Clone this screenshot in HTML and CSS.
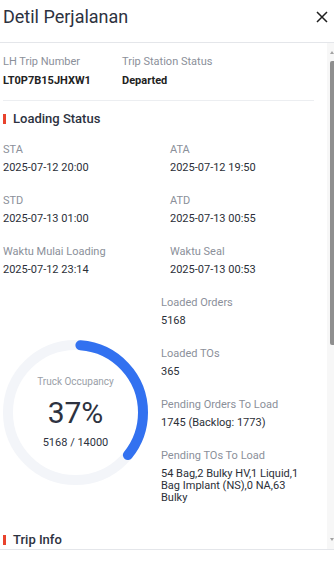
FILE: index.html
```html
<!DOCTYPE html>
<html lang="id">
<head>
    <meta charset="UTF-8">
    <meta name="viewport" content="width=device-width, initial-scale=1.0">
    <title>Detil Perjalanan</title>
    <link rel="stylesheet" href="styles.css">
</head>
<body>
    <div class="drawer">
        <div class="drawer-header">
            <h1>Detil Perjalanan</h1>
            <button class="close" aria-label="Tutup">
                <svg width="12" height="12" viewBox="0 0 12 12">
                    <path d="M1 1L11 11M11 1L1 11" stroke="#1f1f1f" stroke-width="1.5" fill="none"/>
                </svg>
            </button>
        </div>
        <div class="drawer-body">
            <div class="content">
                <div class="trip-row">
                    <div class="field">
                        <div class="label">LH Trip Number</div>
                        <div class="value strong">LT0P7B15JHXW1</div>
                    </div>
                    <div class="field">
                        <div class="label">Trip Station Status</div>
                        <div class="value strong">Departed</div>
                    </div>
                </div>
                <hr class="divider">

                <div class="section">
                    <h2 class="section-title">Loading Status</h2>
                    <div class="grid">
                        <div class="field">
                            <div class="label">STA</div>
                            <div class="value">2025-07-12 20:00</div>
                        </div>
                        <div class="field">
                            <div class="label">ATA</div>
                            <div class="value">2025-07-12 19:50</div>
                        </div>
                        <div class="field">
                            <div class="label">STD</div>
                            <div class="value">2025-07-13 01:00</div>
                        </div>
                        <div class="field">
                            <div class="label">ATD</div>
                            <div class="value">2025-07-13 00:55</div>
                        </div>
                        <div class="field">
                            <div class="label">Waktu Mulai Loading</div>
                            <div class="value">2025-07-12 23:14</div>
                        </div>
                        <div class="field">
                            <div class="label">Waktu Seal</div>
                            <div class="value">2025-07-13 00:53</div>
                        </div>
                    </div>

                    <div class="occupancy">
                        <div class="gauge">
                            <svg width="145" height="145" viewBox="0 0 145 145">
                                <circle cx="72.5" cy="72.5" r="67.5" fill="none" stroke="#f3f5f9" stroke-width="10"/>
                                <circle class="gauge-bar" cx="72.5" cy="72.5" r="67.5" fill="none" stroke="#3271f0" stroke-width="10"
                                    stroke-linecap="round" stroke-dasharray="146.9 400" stroke-dashoffset="-5"/>
                            </svg>
                            <div class="gauge-text">
                                <div class="gauge-label">Truck Occupancy</div>
                                <div class="gauge-percent">37%</div>
                                <div class="gauge-count">5168 / 14000</div>
                            </div>
                        </div>
                        <div class="stats">
                            <div class="stat">
                                <div class="label">Loaded Orders</div>
                                <div class="value">5168</div>
                            </div>
                            <div class="stat">
                                <div class="label">Loaded TOs</div>
                                <div class="value">365</div>
                            </div>
                            <div class="stat">
                                <div class="label">Pending Orders To Load</div>
                                <div class="value">1745 (Backlog: 1773)</div>
                            </div>
                            <div class="stat">
                                <div class="label">Pending TOs To Load</div>
                                <div class="value">54 Bag,2 Bulky HV,1 Liquid,1 Bag Implant (NS),0 NA,63 Bulky</div>
                            </div>
                        </div>
                    </div>
                </div>

                <div class="section trip-info">
                    <h2 class="section-title">Trip Info</h2>
                </div>
            </div>
            <div class="scrollbar">
                <span class="arrow up"></span>
                <div class="track">
                    <div class="thumb"></div>
                </div>
                <span class="arrow down"></span>
            </div>
        </div>
        <div class="drawer-footer"></div>
    </div>
</body>
</html>
```

FILE: styles.css
```css
* {
    box-sizing: border-box;
}
body {
    margin: 0;
    font-family: Roboto, "Noto Sans", sans-serif;
    background: #ffffff;
    color: #2d3240;
}
.drawer {
    display: flex;
    flex-direction: column;
    height: 562px;
    width: 334px;
}
.drawer-header {
    display: flex;
    align-items: center;
    justify-content: space-between;
    height: 43px;
    padding: 0 6px 8px 3px;
    border-bottom: 1px solid #e4e6ea;
    flex-shrink: 0;
}
.drawer-header h1 {
    margin: 0;
    font-size: 18px;
    font-weight: 400;
    color: #2d3240;
    line-height: 24px;
}
.close {
    border: none;
    background: none;
    padding: 0;
    width: 12px;
    height: 12px;
    display: flex;
    cursor: pointer;
}
.drawer-body {
    display: flex;
    height: 506px;
    flex-shrink: 0;
}
.content {
    flex: 1;
    overflow: hidden;
    padding: 12px 13px 0 3px;
}
.scrollbar {
    width: 7px;
    display: flex;
    flex-direction: column;
    background: #f7f7f7;
}
.arrow {
    height: 14px;
    display: flex;
    justify-content: center;
    padding-left: 2px;
}
.arrow::before {
    content: "";
    border-left: 2.5px solid transparent;
    border-right: 2.5px solid transparent;
}
.arrow.up {
    align-items: flex-end;
    padding-bottom: 3px;
}
.arrow.up::before {
    border-bottom: 3px solid #a3a3a3;
}
.arrow.down {
    align-items: flex-start;
    padding-top: 3px;
}
.arrow.down::before {
    border-top: 3px solid #a3a3a3;
}
.track {
    flex: 1;
    padding: 4px 0 0 3px;
}
.thumb {
    height: 284px;
    background: #8f8f8f;
    border-radius: 2px 0 0 2px;
}
.drawer-footer {
    flex: 1;
    border-top: 1px solid #e4e6ea;
}
.label {
    font-size: 11px;
    line-height: 14px;
    color: #8b909a;
    margin-bottom: 5px;
}
.value {
    font-size: 11px;
    line-height: 14px;
    color: #2b2f38;
}
.value.strong {
    font-weight: 700;
    color: #222222;
}
.trip-row {
    display: grid;
    grid-template-columns: 119px 1fr;
}
.divider {
    border: none;
    border-top: 1px solid #eceef1;
    margin: 12px 0 0;
}
.section-title {
    display: flex;
    align-items: center;
    margin: 10px 0 0;
    font-size: 13px;
    font-weight: 500;
    line-height: 16px;
    color: #2d3240;
}
.section-title::before {
    content: "";
    width: 3px;
    height: 10px;
    background: #e8432d;
    margin-right: 7px;
}
.trip-info .section-title {
    margin-top: 4px;
}
.grid {
    display: grid;
    grid-template-columns: 167px 1fr;
    row-gap: 19px;
    margin-top: 16px;
}
.grid .label {
    margin-bottom: 4px;
}
.occupancy {
    display: flex;
    align-items: center;
    gap: 13px;
    margin-top: 19px;
}
.gauge {
    position: relative;
    width: 145px;
    height: 145px;
    flex-shrink: 0;
}
.gauge svg {
    display: block;
}
.gauge-bar {
    transform: rotate(-90deg);
    transform-origin: 50% 50%;
}
.gauge-text {
    position: absolute;
    inset: 0;
    display: flex;
    flex-direction: column;
    align-items: center;
    justify-content: center;
}
.gauge-label {
    font-size: 10px;
    line-height: 14px;
    color: #9aa0a8;
}
.gauge-percent {
    font-size: 30px;
    line-height: 36px;
    margin-top: 6px;
    color: #2d3240;
}
.gauge-count {
    font-size: 11px;
    line-height: 14px;
    margin-top: 5px;
    color: #2d3240;
}
.stats {
    flex: 1;
}
.stat {
    margin-bottom: 20px;
}
.stat:last-child {
    margin-bottom: 24px;
}
.stat .value {
    line-height: 12px;
}
```
